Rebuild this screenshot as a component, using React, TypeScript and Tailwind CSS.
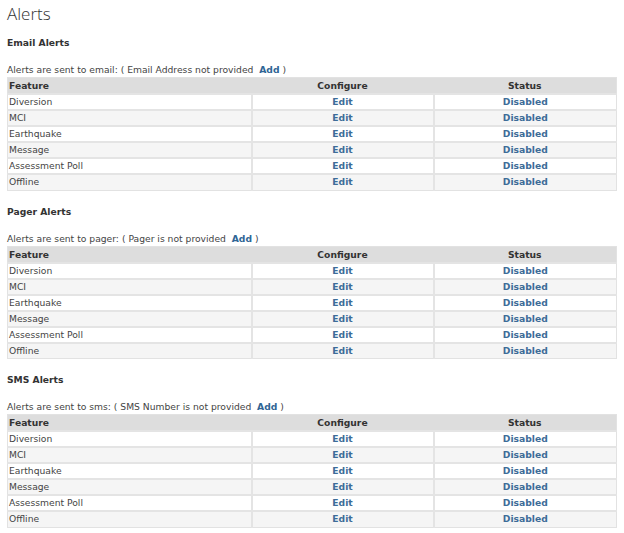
import React from 'react';

const features = ['Diversion', 'MCI', 'Earthquake', 'Message', 'Assessment Poll', 'Offline'];

interface AlertSectionProps {
  title: string;
  channel: string;
  missing: string;
}

const AlertSection: React.FC<AlertSectionProps> = ({ title, channel, missing }) => {
  return (
    <div className="flex flex-col">
      <div className="h-[20px] font-bold text-[#333] leading-[20px]">{title}</div>
      <div className="mt-[11px] h-[12px] leading-[12px] text-[#444]">
        Alerts are sent to {channel}: ( {missing}&nbsp; <span className="font-bold text-[#2f6595]">Add</span> )
      </div>
      <table className="mt-[1px] w-[610px] border-collapse border border-[#e2e2e2]">
        <thead>
          <tr className="h-[15px] bg-[#dddddd] text-[#333]">
            <th className="w-[244px] pl-[1px] text-left font-bold leading-[15px]">Feature</th>
            <th className="w-[182px] text-center font-bold leading-[15px]">Configure</th>
            <th className="text-center font-bold leading-[15px]">Status</th>
          </tr>
        </thead>
        <tbody>
          {features.map((f, i) => (
            <tr key={f} className={`h-[16px] border-t-2 border-[#e4e4e4] ${i % 2 === 0 ? 'bg-white' : 'bg-[#f5f5f5]'}`}>
              <td className="pl-[1px] leading-[14px] text-[#444]">{f}</td>
              <td className="border-l-2 border-[#e4e4e4] text-center font-bold leading-[14px] text-[#3d6c98]">Edit</td>
              <td className="border-l-2 border-[#e4e4e4] text-center font-bold leading-[14px] text-[#3d6c98]">Disabled</td>
            </tr>
          ))}
        </tbody>
      </table>
    </div>
  );
};

export default function App() {
  return (
    <div className="min-h-[533px] bg-white px-[7px] pt-[2px] text-[9.2px] font-['DejaVu_Sans',Verdana,sans-serif]">
      <h1 className="h-[31px] font-['Open_Sans',sans-serif] text-[17px] font-light leading-[24px] text-[#333]">Alerts</h1>
      <div className="flex flex-col gap-[11px]">
        <AlertSection title="Email Alerts" channel="email" missing="Email Address not provided" />
        <AlertSection title="Pager Alerts" channel="pager" missing="Pager is not provided" />
        <AlertSection title="SMS Alerts" channel="sms" missing="SMS Number is not provided" />
      </div>
    </div>
  );
}
